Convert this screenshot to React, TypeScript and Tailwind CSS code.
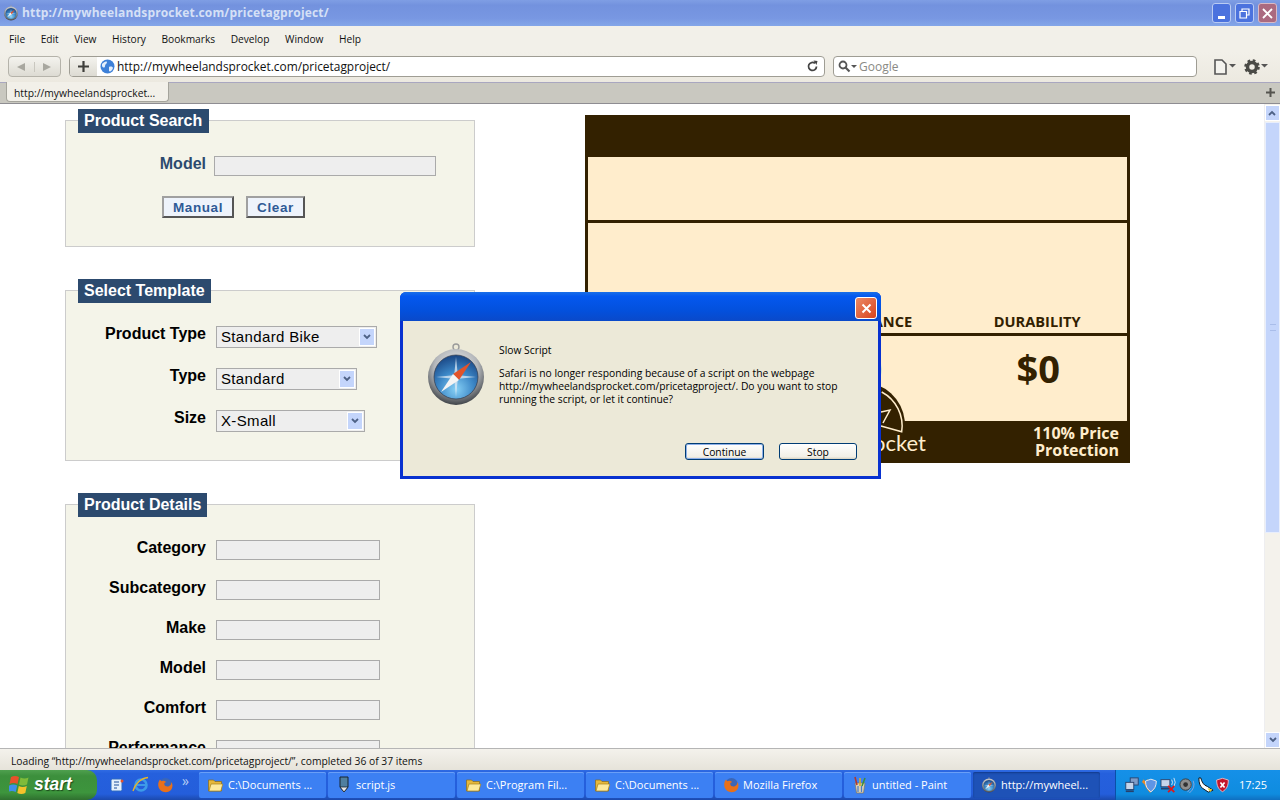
import React from "react";

const Compass = ({ size, id }: { size: number; id: string }) => (
  <svg width={size} height={size} viewBox="0 0 64 64" className="shrink-0">
    <defs>
      <radialGradient id={id + "r"} cx="50%" cy="35%" r="65%">
        <stop offset="0" stopColor="#f6f6f6" />
        <stop offset="0.6" stopColor="#b4b7bb" />
        <stop offset="1" stopColor="#3f4348" />
      </radialGradient>
      <radialGradient id={id + "f"} cx="50%" cy="78%" r="75%">
        <stop offset="0" stopColor="#86d0f5" />
        <stop offset="0.55" stopColor="#3b86c6" />
        <stop offset="1" stopColor="#1c4a88" />
      </radialGradient>
    </defs>
    <circle cx="32" cy="4" r="3" fill="none" stroke="#9a9a9a" strokeWidth="1.4" />
    <circle cx="32" cy="34" r="28" fill={`url(#${id}r)`} />
    <circle cx="32" cy="34" r="22" fill={`url(#${id}f)`} stroke="#30394a" strokeWidth="0.7" />
    <path d="M32 14l2 20-2 20-2-20z" fill="#dfe9f4" opacity="0.75" />
    <path d="M12 34l20-2 20 2-20 2z" fill="#dfe9f4" opacity="0.75" />
    <path d="M47 19L35 37l-6-6z" fill="#e2532a" />
    <path d="M17 49l12-18 6 6z" fill="#f4f4f4" />
  </svg>
);

const Folder = () => (
  <svg width="17" height="16" viewBox="0 0 16 16" className="shrink-0">
    <path d="M1 3h5l1.500 1.500H14V14H1z" fill="#e6b83a" stroke="#8d6c16" strokeWidth="0.7" />
    <path d="M1.500 14l2-7h11.800l-2 7z" fill="#fdea9c" stroke="#a5811d" strokeWidth="0.7" />
  </svg>
);

const Firefox = () => (
  <svg width="16" height="16" viewBox="0 0 16 16" className="shrink-0">
    <circle cx="8.500" cy="7.500" r="6.500" fill="#3a66b8" />
    <path d="M3 2.500c-2.500 3-2.500 8 .8 11 3.200 2.500 8.500 2.200 10.700-1.300 1.500-2.500 1.200-5.500-.2-7.200.2 2-.8 3.600-2.500 4.300-2 .8-4.200-.2-4.500-2C7 6 8.200 5 9.200 5.200 7.800 3.500 5.300 3.300 4.200 4.300z" fill="#e8701a" />
  </svg>
);

const ScriptIcon = () => (
  <svg width="16" height="18" viewBox="0 0 16 18" className="shrink-0">
    <path d="M4 1h8v10l-4 5-4-5z" fill="#4f7f9f" stroke="#16242e" strokeWidth="1" />
    <path d="M4 11h8l-4 5z" fill="#e8e8e8" stroke="#16242e" strokeWidth="0.8" />
  </svg>
);

const Paint = () => (
  <svg width="16" height="18" viewBox="0 0 16 18" className="shrink-0">
    <path d="M3 7h10l-1.500 10h-7z" fill="#d8d0b8" stroke="#7b7460" strokeWidth="0.7" />
    <path d="M5 9l-2-8" stroke="#b5372a" strokeWidth="1.600" />
    <path d="M8 10V2" stroke="#d9a928" strokeWidth="1.600" />
    <path d="M10 10l3-8" stroke="#3c8f3c" strokeWidth="1.600" />
    <path d="M6 10v6M9.500 10v6" stroke="#4b7bc4" strokeWidth="1.200" />
  </svg>
);

const Flag = () => (
  <svg width="22" height="20" viewBox="0 0 22 20" className="shrink-0">
    <path d="M2 2q4-2 8 0L8.500 9q-4-2-8 0z" fill="#e8512a" />
    <path d="M11.500 2.500q4 2 8 0L18 9.500q-4 2-8 0z" fill="#7fbb3a" />
    <path d="M.2 10.500q4-2 8 0L6.700 17q-4-2-8 0z" fill="#3f8fe8" />
    <path d="M9.800 11q4 2 8 0L16.300 18q-4 2-8 0z" fill="#f4c22b" />
  </svg>
);

const Ie = () => (
  <svg width="18" height="18" viewBox="0 0 18 18" className="shrink-0">
    <circle cx="9" cy="9" r="5.500" fill="none" stroke="#3d9be8" strokeWidth="2.600" />
    <path d="M4 9h10" stroke="#3d9be8" strokeWidth="2" />
    <path d="M1 15C3 8 9 2 16 1.500" fill="none" stroke="#e8b52a" strokeWidth="1.300" />
  </svg>
);

const Outlook = () => (
  <svg width="16" height="16" viewBox="0 0 16 16" className="shrink-0">
    <rect x="2" y="2" width="11" height="12" rx="1.500" fill="#e6f0fb" stroke="#2d6ac0" />
    <path d="M5 5h5M5 8h5M5 11h3" stroke="#1c4f9c" strokeWidth="1.200" />
    <circle cx="13" cy="4" r="1.500" fill="#e8512a" />
  </svg>
);

const Globe = () => (
  <svg width="15" height="15" viewBox="0 0 15 15" className="shrink-0">
    <circle cx="7.500" cy="7.500" r="7" fill="#3d80d8" />
    <path d="M2 5c2-2 4-3 5-2 0 2-2 2-2 4s-2 2-3 0zM9 8c2-1 4 0 4 1-1 3-3 4-4 3z" fill="#e4eefb" />
  </svg>
);

const Tray = () => (
  <div className="flex items-center gap-[1px]">
    <svg width="16" height="16" viewBox="0 0 18 18">
      <rect x="7" y="1" width="9" height="8" fill="#7f9cc8" stroke="#27406b" />
      <rect x="2" y="6" width="9" height="8" fill="#c5d4ea" stroke="#27406b" />
      <path d="M2 16h9" stroke="#27406b" strokeWidth="2" />
    </svg>
    <svg width="18" height="17" viewBox="0 0 20 18">
      <path d="M1 5l2-3 2 3 2-3 2 2 3-2 5 2c0 7-2 10-7 13C7 14 5 11 4 8z" fill="#e58a2c" />
      <path d="M5 4l6-2 6 2c0 6-2 9-6 12-4-3-6-6-6-12z" fill="#5f95e5" stroke="#e9f0fb" />
    </svg>
    <svg width="18" height="16" viewBox="0 0 20 18">
      <rect x="1" y="3" width="10" height="8" fill="#c5d4ea" stroke="#27406b" />
      <path d="M1 13h10" stroke="#27406b" strokeWidth="2" />
      <path d="M13 3q2 3 0 6M15.500 1q3 5 0 10" fill="none" stroke="#dfe7f4" />
      <path d="M9 10l7 7M16 10l-7 7" stroke="#e01818" strokeWidth="2" />
    </svg>
    <svg width="17" height="17" viewBox="0 0 18 18">
      <path d="M12 4q3 6-3 12M15 4q3 7-4 13" fill="none" stroke="#86a8de" />
      <circle cx="7" cy="8" r="6" fill="#8f8f8f" stroke="#3c3c3c" />
      <circle cx="7" cy="8" r="2.500" fill="#333" />
    </svg>
    <svg width="17" height="17" viewBox="0 0 18 18">
      <path d="M2 1c0 5 1 9 4 11l6 4 5-2-6-4C7 9 5 5 4 1z" fill="#fff" stroke="#111" />
      <path d="M11 12l5 1-2 3z" fill="#efcf2e" />
    </svg>
    <svg width="15" height="16" viewBox="0 0 18 18">
      <path d="M9 1l7 2c0 7-2 11-7 14C4 14 2 10 2 3z" fill="#c4162a" stroke="#f1c8cd" />
      <path d="M6.500 6l5 6M11.500 6l-5 6" stroke="#fff" strokeWidth="2" />
    </svg>
  </div>
);

const Chevron = () => (
  <svg width="8" height="6" viewBox="0 0 8 6">
    <path d="M1 1l3 3 3-3" fill="none" stroke="#4d6185" strokeWidth="1.800" />
  </svg>
);

const Legend = ({ title, w }: { title: string; w: string }) => (
  <div className={`ml-[12px] -mt-[12px] h-[24px] bg-[#2c4a6e] text-white font-bold text-[16px] leading-[23px] px-[6px] whitespace-nowrap ${w}`}>
    {title}
  </div>
);

const Select = ({ value, w }: { value: string; w: string }) => (
  <div className={`h-[22px] border border-[#aaa] bg-[#eee] flex items-center justify-between pl-[4px] pr-[1px] ${w}`}>
    <span className="text-[15px] font-normal tracking-[0.35px] text-black">{value}</span>
    <span className="w-[16px] h-[18px] bg-[#c4d5fb] border border-white flex items-center justify-center"><Chevron /></span>
  </div>
);

const details = ["Category", "Subcategory", "Make", "Model", "Comfort", "Performance"];
const templates = [
  { label: "Product Type", value: "Standard Bike", w: "w-[161px]" },
  { label: "Type", value: "Standard", w: "w-[141px]" },
  { label: "Size", value: "X-Small", w: "w-[149px]" },
];
const menus = ["File", "Edit", "View", "History", "Bookmarks", "Develop", "Window", "Help"];

const tasks: { icon: React.ReactNode; text: string; active?: boolean }[] = [
  { icon: <Folder />, text: "C:\\Documents ..." },
  { icon: <ScriptIcon />, text: "script.js" },
  { icon: <Folder />, text: "C:\\Program Fil..." },
  { icon: <Folder />, text: "C:\\Documents ..." },
  { icon: <Firefox />, text: "Mozilla Firefox" },
  { icon: <Paint />, text: "untitled - Paint" },
  { icon: <Compass size={16} id="task" />, text: "http://mywheel...", active: true },
];

const ui = "font-['Open_Sans','Noto_Sans',sans-serif]";

const PriceTag = () => (
  <div className="relative w-[545px] h-[348px] bg-[#332100] px-[3px] flex flex-col font-['Open_Sans',sans-serif] text-[#332100]">
    <div className="h-[42px] shrink-0" />
    <div className="h-[63px] shrink-0 bg-[#ffedcc]" />
    <div className="h-[3px] shrink-0" />
    <div className="h-[110px] shrink-0 bg-[#ffedcc] grid grid-cols-3 items-end text-center text-[14.600px] font-bold leading-[22px] pb-[1px]">
      <span>COMFORT</span>
      <span>PERFORMANCE</span>
      <span>DURABILITY</span>
    </div>
    <div className="h-[3px] shrink-0" />
    <div className="h-[85px] shrink-0 bg-[#ffedcc] grid grid-cols-3 text-center text-[38px] font-bold leading-[65px] pl-[6px]">
      <span>$0</span>
      <span>$0</span>
      <span>$0</span>
    </div>
    <div className="flex-1 flex items-center text-[#ffedcc]">
      <div className="w-[338px] flex justify-end text-[22px] font-normal leading-none pt-[2px] font-['Lato',sans-serif]">Sprocket</div>
      <div className="flex-1 text-right pr-[8px] text-[16px] font-bold leading-[17px]">110% Price<br />Protection</div>
    </div>
    <svg width="86" height="53" viewBox="0 0 86 53" className="absolute left-[234px] top-[267px]">
      <path d="M.2 39A43 43 0 0 1 85.800 39z" fill="#332100" />
      <path d="M62.700 10A38.500 38.500 0 0 1 82.700 49.700L62 44" fill="none" stroke="#ffedcc" strokeWidth="1.500" />
      <path d="M62 30l9-2-7 13" fill="none" stroke="#ffedcc" strokeWidth="1.500" />
    </svg>
  </div>
);

const SlowScript = () => (
  <div className={`absolute left-[400px] top-[292px] w-[481px] h-[187px] rounded-t-[6px] overflow-hidden bg-[#0831d0] flex flex-col ${ui}`}>
    <div className="h-[29px] shrink-0 flex items-center justify-end pr-[4px] pt-[3px] bg-[linear-gradient(#1a6fe8,#0458ef_15%,#0350dc_65%,#0a49c9)]">
      <div className="w-[22px] h-[22px] rounded-[3px] border border-white bg-[linear-gradient(135deg,#eb8a66,#d8431c)] flex items-center justify-center">
        <svg width="11" height="11" viewBox="0 0 11 11">
          <path d="M1.500 1.500l8 8M9.500 1.500l-8 8" stroke="#fff" strokeWidth="2" />
        </svg>
      </div>
    </div>
    <div className="flex-1 mx-[3px] mb-[3px] bg-[#ece9d8] flex pl-[21px] pt-[22px] text-[10.300px] leading-[13px] text-black">
      <Compass size={64} id="dlg" />
      <div className="ml-[11px] w-[345px] pt-[1px]">
        <p className="mb-[10px]">Slow Script</p>
        <p>Safari is no longer responding because of a script on the webpage http://mywheelandsprocket.com/pricetagproject/. Do you want to stop running the script, or let it continue?</p>
        <div className="flex justify-end gap-[15px] mt-[37px] -mr-[13px]">
          <button className="w-[79px] h-[17px] rounded-[3px] border border-[#003c74] bg-[linear-gradient(#fff,#f1efe6_85%,#d8d2c0)] shadow-[inset_0_0_0_1px_#8eb0e8] text-[10.300px] leading-[14px]">Continue</button>
          <button className="w-[78px] h-[17px] rounded-[3px] border border-[#003c74] bg-[linear-gradient(#fff,#f1efe6_85%,#d8d2c0)] text-[10.300px] leading-[14px]">Stop</button>
        </div>
      </div>
    </div>
  </div>
);

export default function App() {
  return (
    <div className="relative w-[1280px] h-[800px] overflow-hidden flex flex-col bg-white font-['Liberation_Sans',sans-serif]">
      {/* title bar */}
      <div className="h-[26px] shrink-0 flex items-center bg-[linear-gradient(#7f9ee4,#7392de_20%,#7897e2_70%,#84a6e8)] pl-[3px] pr-[3px]">
        <Compass size={16} id="title" />
        <span className={`ml-[3px] flex-1 text-[12px] font-bold text-[#d5e0f6] tracking-[0.16px] ${ui}`}>http://mywheelandsprocket.com/pricetagproject/</span>
        <div className="flex gap-[4px]">
          <div className="w-[19px] h-[20px] rounded-[3px] border border-[#b9cbf3] bg-[#4b72de] flex items-end pb-[3px] pl-[5px]">
            <div className="w-[7px] h-[3px] bg-white" />
          </div>
          <div className="w-[19px] h-[20px] rounded-[3px] border border-[#b9cbf3] bg-[#4b72de] flex items-center justify-center">
            <svg width="11" height="11" viewBox="0 0 11 11">
              <path d="M3 3V1h7v6H8M1 3.500h6.500v6.500H1z" fill="none" stroke="#fff" strokeWidth="1.200" />
            </svg>
          </div>
          <div className="w-[19px] h-[20px] rounded-[3px] border border-[#d9b9c4] bg-[#ab6a80] flex items-center justify-center">
            <svg width="11" height="11" viewBox="0 0 11 11">
              <path d="M1 1l9 9M10 1l-9 9" stroke="#fff" strokeWidth="1.800" />
            </svg>
          </div>
        </div>
      </div>

      {/* menu bar */}
      <div className={`h-[26px] shrink-0 bg-[#f2f0e9] flex items-center pl-[9px] pt-[1px] gap-[15.500px] text-[10.200px] text-[#111] ${ui}`}>
        {menus.map((m) => (
          <span key={m}>{m}</span>
        ))}
      </div>

      {/* toolbar */}
      <div className="h-[31px] shrink-0 bg-[linear-gradient(#f2f0e9,#ece9e0)] border-b border-[#a9a7c0] flex items-start pt-[4px] pl-[8px]">
        <div className="w-[53px] h-[21px] rounded-[4px] border border-[#b5b3aa] bg-[linear-gradient(#f4f3ee,#dddbd3)] flex items-center">
          <div className="w-[26px] flex justify-center border-r border-[#c9c7bf]">
            <svg width="10" height="10" viewBox="0 0 10 10"><path d="M9 1v8L1 5z" fill="#a8a79f" /></svg>
          </div>
          <div className="w-[26px] flex justify-center">
            <svg width="10" height="10" viewBox="0 0 10 10"><path d="M1 1v8l8-4z" fill="#a8a79f" /></svg>
          </div>
        </div>
        <div className="ml-[8px] w-[756px] h-[21px] rounded-[4px] border border-[#9f9d94] bg-white flex items-center overflow-hidden">
          <div className="w-[27px] h-full bg-[linear-gradient(#f4f3ee,#dddbd3)] flex items-center justify-center">
            <svg width="11" height="11" viewBox="0 0 11 11"><path d="M5.500 0v11M0 5.500h11" stroke="#3f3f3b" strokeWidth="2.200" /></svg>
          </div>
          <div className="ml-[3px]"><Globe /></div>
          <span className="ml-[2px] pt-[1px] flex-1 text-[11.900px] text-[#111] font-['Open_Sans',sans-serif]">http://mywheelandsprocket.com/pricetagproject/</span>
          <svg width="13" height="13" viewBox="0 0 13 13" className="mr-[5px]">
            <path d="M10.500 6.500a4 4 0 1 1-1.500-3.200" fill="none" stroke="#444" strokeWidth="1.800" />
            <path d="M7.500 0.500l4 .5-1 4z" fill="#444" />
          </svg>
        </div>
        <div className="ml-[8px] w-[364px] h-[21px] rounded-[4px] border border-[#9f9d94] bg-white flex items-center pl-[4px]">
          <svg width="19" height="13" viewBox="0 0 19 13">
            <circle cx="5" cy="5" r="3.500" fill="none" stroke="#555" strokeWidth="1.800" />
            <path d="M7.500 7.500l4 4" stroke="#555" strokeWidth="2.200" />
            <path d="M13 5h6l-3 3z" fill="#555" />
          </svg>
          <span className="ml-[2px] pt-[1px] text-[12px] text-[#8a8a85] font-['Open_Sans',sans-serif]">Google</span>
        </div>
        <svg width="22" height="16" viewBox="0 0 22 16" className="ml-[17px] mt-[3px]">
          <path d="M1 1h7l4 4v10H1z" fill="#f4f3ee" stroke="#555" strokeWidth="1.600" />
          <path d="M15 5h7l-3.500 3.500z" fill="#555" />
        </svg>
        <svg width="24" height="16" viewBox="0 0 24 16" className="ml-[8px] mt-[3px]">
          <circle cx="8" cy="8" r="4.500" fill="none" stroke="#4a4a46" strokeWidth="3.500" />
          <circle cx="8" cy="8" r="6.500" fill="none" stroke="#4a4a46" strokeWidth="2.600" strokeDasharray="2.600 2.500" />
          <path d="M17 5h7l-3.500 3.500z" fill="#555" />
        </svg>
      </div>

      {/* tab strip */}
      <div className="h-[21px] shrink-0 bg-[#c9c8c0] border-b border-[#8e8d92] flex items-start pl-[6px] pr-[5px] justify-between">
        <div className={`w-[163px] h-[20px] -mt-[1px] rounded-b-[4px] bg-[#f2f0e9] border-x border-b border-[#a5a49c] pl-[7px] pt-[1px] text-[10.300px] leading-[20px] text-[#111] ${ui}`}>
          http://mywheelandsprocket...
        </div>
        <svg width="9" height="9" viewBox="0 0 9 9" className="mt-[5px]"><path d="M4.500 0v9M0 4.500h9" stroke="#55544f" strokeWidth="2" /></svg>
      </div>

      {/* page */}
      <div className="flex-1 min-h-0 flex bg-white">
        <div className="flex-1 min-w-0 overflow-hidden flex items-start">
          <div className="ml-[65px] w-[410px] pt-[16px] shrink-0 font-bold text-[16px]">
            <section className="h-[127px] border border-[#ccc] bg-[#f4f4e9]">
              <Legend title="Product Search" w="w-[131px]" />
              <div className="flex mt-[23px]">
                <span className="w-[140px] text-right text-[#2c4a6e] leading-[16px]">Model</span>
                <div className="ml-[8px] w-[222px] h-[20px] border border-[#aaa] bg-[#eee]" />
              </div>
              <div className="flex gap-[12px] ml-[96px] mt-[20px]">
                <button className="w-[72px] h-[22px] border-2 border-[#a0a0a0] border-r-[#555] border-b-[#555] bg-[#eef3fb] text-[#2f5a96] text-[13.500px] leading-[17px] tracking-[0.6px]">Manual</button>
                <button className="w-[59px] h-[22px] border-2 border-[#a0a0a0] border-r-[#555] border-b-[#555] bg-[#eef3fb] text-[#2f5a96] text-[13.500px] leading-[17px] tracking-[0.6px]">Clear</button>
              </div>
            </section>

            <section className="h-[171px] mt-[43px] border border-[#ccc] bg-[#f4f4e9]">
              <Legend title="Select Template" w="w-[133px]" />
              <div className="mt-[23px] flex flex-col gap-[20px]">
                {templates.map((t) => (
                  <div key={t.label} className="flex">
                    <span className="w-[140px] text-right leading-[16px] whitespace-nowrap">{t.label}</span>
                    <div className="ml-[10px]"><Select value={t.value} w={t.w} /></div>
                  </div>
                ))}
              </div>
            </section>

            <section className="h-[400px] mt-[43px] border border-[#ccc] bg-[#f4f4e9]">
              <Legend title="Product Details" w="w-[129px]" />
              <div className="mt-[23px] flex flex-col gap-[20px]">
                {details.map((d) => (
                  <div key={d} className="flex">
                    <span className="w-[140px] text-right leading-[16px]">{d}</span>
                    <div className="ml-[10px] w-[164px] h-[20px] border border-[#aaa] bg-[#eee]" />
                  </div>
                ))}
              </div>
            </section>
          </div>
          <div className="ml-[110px] mt-[11px] shrink-0"><PriceTag /></div>
        </div>

        {/* scrollbar */}
        <div className="w-[16px] shrink-0 bg-[#f4f2ec] flex flex-col border-l border-[#eeeef0] pt-[1px]">
          <div className="h-[16px] bg-[#c4d5fb] border border-white flex items-center justify-center rotate-180"><Chevron /></div>
          <div className="h-[411px] mt-[1px] bg-[#c4d5fb] border border-[#e8eefc] flex items-center justify-center">
            <div className="w-[6px] h-[7px] border-y border-[#a9bdea]" />
          </div>
          <div className="flex-1" />
          <div className="h-[16px] bg-[#c4d5fb] border border-white flex items-center justify-center"><Chevron /></div>
        </div>
      </div>

      {/* status bar */}
      <div className={`h-[22px] shrink-0 border-t border-[#b5b5b5] bg-[linear-gradient(#f4f2ec,#e6e3da)] pl-[11px] pt-[1px] text-[10.300px] leading-[22px] text-[#111] ${ui}`}>
        Loading “http://mywheelandsprocket.com/pricetagproject/”, completed 36 of 37 items
      </div>

      {/* taskbar */}
      <div className={`h-[30px] shrink-0 flex items-center bg-[linear-gradient(#2f6be3,#2560dd_12%,#245edb_80%,#1b49ad)] ${ui}`}>
        <div className="w-[97px] h-full shrink-0 rounded-r-[10px] bg-[linear-gradient(#4fa04f,#3c8f3c_20%,#3d953d_75%,#2f6f2f)] flex items-center pl-[9px] gap-[3px]">
          <Flag />
          <span className="text-[17.500px] font-bold italic text-white leading-none font-['Liberation_Sans',sans-serif] [text-shadow:1px_1px_1px_#1c4a1c]">start</span>
        </div>
        <div className="w-[102px] shrink-0 flex items-center pl-[12px] gap-[7px]">
          <Outlook />
          <Ie />
          <Firefox />
          <span className="text-[#b9cff5] text-[14px] leading-none -mt-[8px] ml-[2px]">»</span>
        </div>
        <div className="flex gap-[2px] items-center">
          {tasks.map((t, i) => (
            <div key={i} className={`w-[127px] h-[26px] rounded-[2px] flex items-center pl-[8px] gap-[4px] text-white text-[11px] whitespace-nowrap ${t.active ? "bg-[#1e52b7] shadow-[inset_0_1px_2px_#123a8a]" : "bg-[#3c80f3] shadow-[inset_0_1px_0_#6a9ff7]"}`}>
              {t.icon}
              <span>{t.text}</span>
            </div>
          ))}
        </div>
        <div className="ml-auto w-[165px] h-full shrink-0 bg-[linear-gradient(#1590e8,#0f8cdf_80%,#0f6fc0)] border-l border-[#0a4fa8] flex items-center pl-[8px] justify-between pr-[13px]">
          <Tray />
          <span className="text-white text-[11px]">17:25</span>
        </div>
      </div>

      <SlowScript />
    </div>
  );
}
